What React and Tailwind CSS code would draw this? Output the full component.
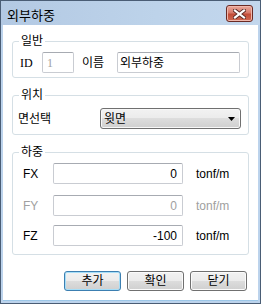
import React from 'react';

const sans = "font-['Liberation_Sans','Noto_Sans_CJK_KR',sans-serif]";
const serif = "font-['Liberation_Serif','Noto_Sans_CJK_KR',serif]";

const btnBg =
  'bg-[linear-gradient(#f2f2f2,#ebebeb_50%,#dddddd_50%,#cfcfcf)]';

const TextBox = ({ width, value, align = 'left', disabled = false, className = '' }) => (
  <div
    className={`${width} h-[21px] flex items-center bg-white border border-[#c9ccd2] border-t-[#a7abb2] rounded-[2px] ${
      align === 'right' ? 'justify-end pr-[5px]' : 'pl-[2px]'
    } ${disabled ? 'text-[#a0a0a0]' : 'text-black'} ${className}`}
  >
    {value}
  </div>
);

const Group = ({ title, className = '', children }) => (
  <fieldset className={`border border-[#d5dfe5] rounded-[3px] ${className}`}>
    <legend className="ml-[6px] px-[2px] text-[12px] leading-[12px]">{title}</legend>
    {children}
  </fieldset>
);

const Button = ({ label, primary = false }) => (
  <button
    className={`w-[57px] h-[20px] rounded-[3px] border text-[12px] leading-[12px] text-black ${btnBg} ${
      primary
        ? 'border-[#3c7fb1] shadow-[inset_0_0_0_1px_#a6def8]'
        : 'border-[#707070] shadow-[inset_0_0_0_1px_#fbfbfb]'
    }`}
  >
    {label}
  </button>
);

const CloseButton = () => (
  <div className="w-[27px] h-[17px] rounded-[3px] border border-[#6a2a24] bg-[linear-gradient(#eaa99c,#d77a6a_45%,#c24b36_55%,#cf6a52)] flex items-center justify-center shadow-[inset_0_0_0_1px_#f0b8ac]">
    <svg width="13" height="10" viewBox="0 0 13 10">
      <path d="M2 1.5 L11 8.5 M11 1.5 L2 8.5" stroke="#5a2a24" strokeWidth="4" strokeLinecap="square" />
      <path d="M2 1.5 L11 8.5 M11 1.5 L2 8.5" stroke="#ffffff" strokeWidth="2.2" strokeLinecap="square" />
    </svg>
  </div>
);

const LoadRow = ({ label, value, disabled = false, className = '' }) => (
  <div className={`flex items-center h-[21px] pl-[10px] ${className}`}>
    <span className={`w-[30px] text-[12px] leading-[12px] ${disabled ? 'text-[#a0a0a0]' : 'text-black'}`}>
      {label}
    </span>
    <TextBox width="w-[130px]" value={value} align="right" disabled={disabled} className="text-[12px]" />
    <span className={`ml-[13px] text-[12px] leading-[12px] ${disabled ? 'text-[#a0a0a0]' : 'text-black'}`}>
      tonf/m
    </span>
  </div>
);

export default function App() {
  return (
    <div className={`w-[261px] h-[304px] border border-[#4a5d75] bg-[#bcd3ec] flex flex-col ${sans}`}>
      {/* title bar */}
      <div className="h-[24px] flex items-start bg-[linear-gradient(90deg,#b3c9e3,#bdd3ea_60%,#c3d7ed)]">
        <span className="ml-[6px] mt-[8px] text-[13px] leading-[13px] text-black">외부하중</span>
        <div className="ml-auto mt-[4px] mr-[7px]">
          <CloseButton />
        </div>
      </div>

      {/* client area */}
      <div className="flex-1 mx-[2px] mb-[2px] bg-white flex flex-col px-[9px] text-black border-b border-b-[#9cc7e8]">
        <Group title="일반" className="mt-[10px] pt-[5px] pb-[4px]">
          <div className="flex items-center h-[21px] pl-[7px] text-[12px] leading-[12px]">
            <span className={`w-[22px] ${serif}`}>ID</span>
            <TextBox width="w-[32px]" value="1" disabled className={`pl-[4px] ${serif}`} />
            <span className="ml-[8px] w-[35px]">이름</span>
            <TextBox width="w-[123px]" value="외부하중" />
          </div>
        </Group>

        <Group title="위치" className="mt-[11px] pt-[7px] pb-[5px]">
          <div className="flex items-center h-[21px] pl-[5px] text-[12px] leading-[12px]">
            <span className="w-[82px]">면선택</span>
            <div className={`w-[141px] h-[21px] flex items-center rounded-[3px] border border-[#707070] ${btnBg} shadow-[inset_0_0_0_1px_#f8f8f8] pl-[3px] pr-[5px]`}>
              <span>윗면</span>
              <svg className="ml-auto" width="7" height="4" viewBox="0 0 7 4">
                <path d="M0 0 H7 L3.5 4 Z" fill="#000000" />
              </svg>
            </div>
          </div>
        </Group>

        <Group title="하중" className="mt-[11px] pt-[5px] pb-[8px]">
          <LoadRow label="FX" value="0" />
          <LoadRow label="FY" value="0" disabled className="mt-[11px]" />
          <LoadRow label="FZ" value="-100" className="mt-[9px]" />
        </Group>

        <div className="mt-[16px] flex justify-end gap-[6px] pr-[2px]">
          <Button label="추가" primary />
          <Button label="확인" />
          <Button label="닫기" />
        </div>
      </div>
    </div>
  );
}
